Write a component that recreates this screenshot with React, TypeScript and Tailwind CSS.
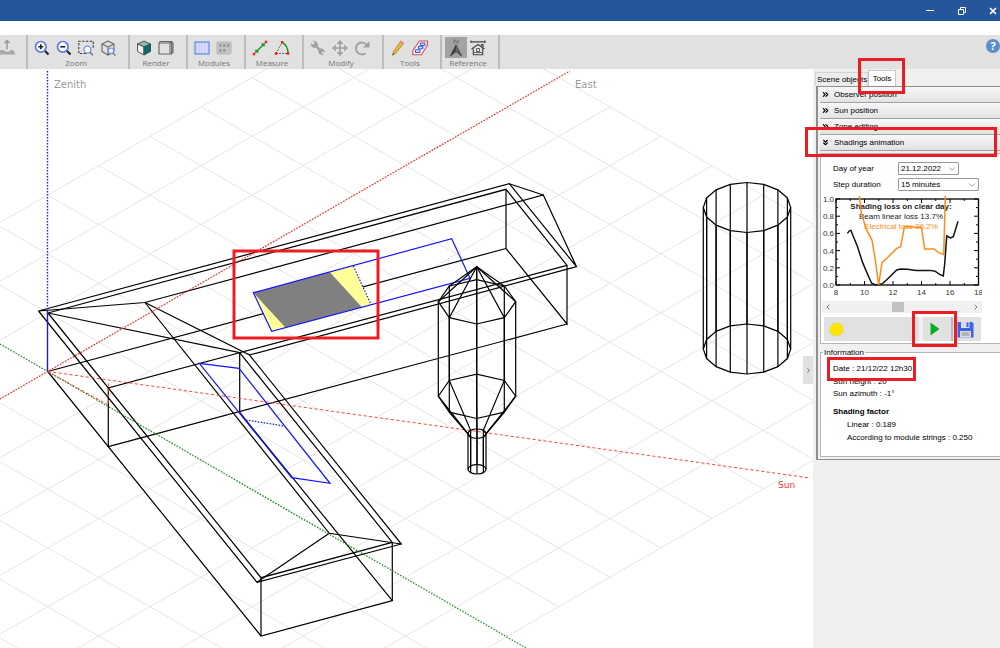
import { useState } from 'react';
import type { ReactNode } from 'react';
import { ChevronDown, ChevronLeft, ChevronRight, ChevronsDown, ChevronsRight, Move, X } from 'lucide-react';

type Point = [number, number];

const toPoints = (pts: Point[]) => pts.map((p) => p.join(',')).join(' ');

/* ---------- toolbar ---------- */

function Icon({ children, size = 16 }: { children: ReactNode; size?: number }) {
  return (
    <svg width={size} height={size} viewBox="0 0 16 16" fill="none" aria-hidden="true">
      {children}
    </svg>
  );
}

function Magnifier({ minus }: { minus?: boolean }) {
  return (
    <Icon>
      <path d="M10.5 10.5 14.5 14.5" stroke="#222" strokeWidth="2.2" />
      <circle cx="6.8" cy="6.8" r="5.3" fill="#fff" stroke="#5b78f0" strokeWidth="1.7" />
      <path d={minus ? 'M4.3 6.8h5' : 'M4.3 6.8h5M6.8 4.3v5'} stroke="#222" strokeWidth="1.6" />
    </Icon>
  );
}

function ZoomWindowIcon() {
  return (
    <Icon>
      <path d="M8 13.5H.8V1.2h14.4V8" stroke="#333" strokeWidth="1.1" strokeDasharray="2.4 1.4" />
      <circle cx="9.4" cy="9.6" r="3.5" fill="#fff" stroke="#6f8bf2" strokeWidth="1.3" />
      <path d="M12 12.2 15 15.3" stroke="#777" strokeWidth="1.6" />
    </Icon>
  );
}

function ZoomAllIcon() {
  return (
    <Icon>
      <path d="M8 1 14 4v7.5L8 15 2 11.5V4zM2 4l6 3 6-3M8 7v8" stroke="#666" strokeWidth="1.1" />
      <circle cx="11" cy="10.8" r="2.8" fill="#eef" stroke="#6f8bf2" strokeWidth="1.1" />
      <path d="m13 13 2.4 2.4" stroke="#777" strokeWidth="1.4" />
    </Icon>
  );
}

function ShadedCubeIcon() {
  return (
    <Icon>
      <path d="M8 1 14.5 4 8 7 1.5 4z" fill="#8fb9b9" stroke="#555" />
      <path d="M1.5 4 8 7v8l-6.5-3.5z" fill="#efefef" stroke="#555" />
      <path d="M14.5 4 8 7v8l6.5-3.5z" fill="#0d6b6b" stroke="#2b5555" />
    </Icon>
  );
}

function WireBoxIcon() {
  return (
    <Icon>
      <path d="M1 3h11v11H1zM1 3l1.2-1.5h11.5L15 3v9l-1.3 2H12M12 3l1.7-1.5M13.7 1.5V14" stroke="#666" strokeWidth="1.1" />
    </Icon>
  );
}

function ModulesIcon() {
  return (
    <Icon>
      <rect x="1" y="2" width="14" height="12" fill="#c9ccff" />
      <path d="M3.8 2v12M6.6 2v12M9.4 2v12M12.2 2v12M1 5h14M1 8h14M1 11h14" stroke="#e9eaff" strokeWidth=".5" />
      <rect x="1" y="2" width="14" height="12" stroke="#5c8be8" strokeWidth="1.2" />
    </Icon>
  );
}

function ModulesOffIcon() {
  return (
    <Icon>
      <rect x="1" y="2" width="14" height="12" rx="1" fill="#c4c4c4" stroke="#b4b4b4" />
      <path d="M3 4h2.5v3H3zM7 4h2.5v3H7zM11 4h2.5v3H11zM3 9h2.5v3H3zM7 9h2.5v3H7z" fill="#9c9c9c" />
    </Icon>
  );
}

function DistanceIcon() {
  return (
    <Icon>
      <path d="M2 14 14 2" stroke="#777" />
      <path d="M4 12 12 4M4 12V9.5M4 12h2.5M12 4v2.5M12 4H9.5" stroke="#159a25" strokeWidth="1.5" />
      <path d="M.8 12.8h2.4v2.4H.8zM12.8.8h2.4v2.4h-2.4z" fill="#f01818" />
    </Icon>
  );
}

function AngleIcon() {
  return (
    <Icon>
      <path d="M2 13.5 8 2.5M2 13.5h12" stroke="#666" strokeDasharray="2 1" />
      <path d="M9 3c3 1.5 5 6 5 9.5" stroke="#159a25" strokeWidth="1.5" />
      <path d="M.8 12.3h2.4v2.4H.8zM7 1h2.4v2.4H7zM12.8 12.3h2.4v2.4h-2.4z" fill="#f01818" />
    </Icon>
  );
}

function WrenchIcon() {
  return (
    <Icon>
      <path
        d="M3.5.8 6 1.8c1.5 1 2 2.6 1.5 4.2l2.3 3c1.7-.5 3.5 0 4.3 1.5l.4 1.5-2-.8-1.2 1 .3 1.5 1.8.8c-2 .6-4-.3-4.7-2-.3-1 0-1.7.1-2L6 7.5C4 8 2.2 7 1.5 5.5L1.2 3.5 3 4.8l1.7-.8.1-1.5z"
        fill="#a0a0a0"
        stroke="#a0a0a0"
        strokeWidth=".6"
      />
    </Icon>
  );
}

function RotateIcon() {
  return (
    <Icon>
      <path d="M11.5 13.3A6 6 0 1 1 12.8 5" stroke="#a0a0a0" strokeWidth="1.9" />
      <path d="M15.5 1v6.5H9z" fill="#a0a0a0" />
    </Icon>
  );
}

function PencilIcon() {
  return (
    <Icon>
      <path d="m2.5 15.3 1-4L10.8 1l3 2L6 13.3z" fill="#e8b23c" stroke="#a9792a" strokeWidth=".6" />
      <path d="m10 2 1-1.3 3 2-1 1.5z" fill="#e58a7d" />
      <path d="m2.5 15.3.5-2 1.3 1z" fill="#333" />
    </Icon>
  );
}

function PartitionIcon() {
  return (
    <Icon>
      <path d="M.8 10.5 7.5 1h8v4l-6 9.8H.8z" fill="#f4f6ff" stroke="#e04848" strokeWidth="1.1" />
      <path d="M8.5 3H13v2.5H8.5zM6.5 6.3H11v2.5H6.5zM3.5 9.8H8v2.7H3.5z" stroke="#3557d6" fill="#d8e0ff" />
    </Icon>
  );
}

function NorthIcon() {
  return (
    <Icon size={18}>
      <path d="M6.3 4V.5L9.7 4V.5" stroke="#666" strokeWidth=".8" />
      <path d="m8 5.5 5 9.5-5-4-5 4z" fill="#6a6a6a" stroke="#4a4a4a" strokeWidth=".9" />
      <path d="M8 5.5V11l-5 4z" fill="#444" />
    </Icon>
  );
}

function HouseIcon() {
  return (
    <Icon>
      <path d="M1 1.8h14M1 .5v2.6M15 .5v2.6" stroke="#444" strokeWidth="1.2" />
      <path d="M1.5 9 8 4.5 14.5 9M3.3 8.5v6.3h9.4V8.5M11.5 6V4.5H13v3" stroke="#444" strokeWidth="1.1" />
      <path d="M6.5 8.5h3v3h-3zM3.5 12.5h9" stroke="#555" strokeWidth=".9" />
    </Icon>
  );
}

interface Tool {
  name: string;
  icon: ReactNode;
  active?: boolean;
}

interface ToolGroup {
  label: string;
  width: string;
  tools: Tool[];
}

const GROUPS: ToolGroup[] = [
  {
    label: 'Zoom',
    width: 'w-[102px]',
    tools: [
      { name: 'Zoom in', icon: <Magnifier /> },
      { name: 'Zoom out', icon: <Magnifier minus /> },
      { name: 'Zoom window', icon: <ZoomWindowIcon /> },
      { name: 'Zoom all', icon: <ZoomAllIcon /> },
    ],
  },
  {
    label: 'Render',
    width: 'w-[58px]',
    tools: [
      { name: 'Realistic', icon: <ShadedCubeIcon /> },
      { name: 'Wireframe', icon: <WireBoxIcon /> },
    ],
  },
  {
    label: 'Modules',
    width: 'w-[58px]',
    tools: [
      { name: 'Show modules', icon: <ModulesIcon /> },
      { name: 'Show strings', icon: <ModulesOffIcon /> },
    ],
  },
  {
    label: 'Measure',
    width: 'w-[58px]',
    tools: [
      { name: 'Distance', icon: <DistanceIcon /> },
      { name: 'Angle', icon: <AngleIcon /> },
    ],
  },
  {
    label: 'Modify',
    width: 'w-[80px]',
    tools: [
      { name: 'Edit', icon: <WrenchIcon /> },
      { name: 'Move', icon: <Move size={16} color="#a0a0a0" strokeWidth={2.5} /> },
      { name: 'Rotate', icon: <RotateIcon /> },
    ],
  },
  {
    label: 'Tools',
    width: 'w-[58px]',
    tools: [
      { name: 'Zone editing', icon: <PencilIcon /> },
      { name: 'Partition', icon: <PartitionIcon /> },
    ],
  },
  {
    label: 'Reference',
    width: 'w-[58px]',
    tools: [
      { name: 'North', icon: <NorthIcon />, active: true },
      { name: 'Building', icon: <HouseIcon /> },
    ],
  },
];

function TitleBar() {
  return (
    <header className="flex h-[21px] shrink-0 items-center justify-end gap-5 bg-[#25559b] pr-0.5 text-white">
      <button aria-label="Minimize" className="flex w-3 justify-center">
        <span className="h-px w-2 bg-white" />
      </button>
      <button aria-label="Restore" className="flex w-3 justify-center">
        <svg width="8" height="8" viewBox="0 0 8 8" fill="none" stroke="#fff">
          <path d="M.5 2.5h5v5h-5zM2.5 2.5v-2h5v5h-2" />
        </svg>
      </button>
      <button aria-label="Close" className="flex w-2.5 justify-center">
        <X size={10} strokeWidth={4} />
      </button>
    </header>
  );
}

function Toolbar() {
  return (
    <nav className="mt-3.5 flex h-[34px] shrink-0 bg-[#e1e1e1] font-['Open_Sans',sans-serif]">
      <div className="flex w-7 items-start border-r-2 border-[#bdbdbd] pt-1">
        <button aria-label="Export">
          <Icon>
            <path d="M7 10.5v-9M4.5 4 7 1.5 9.5 4" stroke="#999" strokeWidth="1.5" />
            <path d="M0 11h4l1 1.5h4.5l1-1.5h3l2 4.5H0z" fill="#a8a8a8" />
          </Icon>
        </button>
      </div>
      {GROUPS.map((g) => (
        <div key={g.label} className={`flex shrink-0 flex-col items-center border-r-2 border-[#bdbdbd] pr-1 ${g.width}`}>
          <div className="flex pt-0.5 pr-0.5">
            {g.tools.map((t) => (
              <button
                key={t.name}
                aria-label={t.name}
                className={`flex h-[21px] w-[22px] items-center justify-center ${t.active ? 'bg-[#a3a3a3]' : ''}`}
              >
                {t.icon}
              </button>
            ))}
          </div>
          <span className="text-[8px] leading-[10px] text-[#777]">{g.label}</span>
        </div>
      ))}
      <button aria-label="Help" className="ml-auto flex w-[14px] items-start pt-1">
        <span className="flex h-[14px] w-[14px] shrink-0 items-center justify-center rounded-full bg-[#5b8fc9] text-[11px] font-bold text-white">
          ?
        </span>
      </button>
    </nav>
  );
}

/* ---------- 3D scene ---------- */

const ORIGIN: Point = [47.7, 371.5];
const STEP_X = 51.1;
const STEP_Y = 29.4;

const gridPoint = (i: number, j: number): Point => [
  ORIGIN[0] + (i + j) * STEP_X,
  ORIGIN[1] + (j - i) * STEP_Y,
];

function Grid() {
  const lines: [Point, Point][] = [];
  for (let j = -3; j <= 9; j++) lines.push([gridPoint(-9, j), gridPoint(10, j)]);
  for (let i = -9; i <= 10; i++) lines.push([gridPoint(i, -3), gridPoint(i, 9)]);
  return (
    <g stroke="#e6e6e6">
      {lines.map(([a, b], k) => (
        <line key={k} x1={a[0]} y1={a[1]} x2={b[0]} y2={b[1]} />
      ))}
    </g>
  );
}

const BUILDING: Point[][] = [
  // long wing, roof
  [[249.5, 355], [576.5, 266.7], [509.3, 183.7], [38.5, 311], [145, 302.5], [543.3, 195], [576.5, 266.7]],
  [[543.3, 195], [509.3, 183.7]],
  [[48, 313], [506, 189.3], [567, 265.3], [239.7, 352.7], [48, 313]],
  // long wing, walls
  [[506, 189.3], [506, 248.5], [567, 324], [567, 265.3]],
  [[47.7, 371.5], [506, 248.5]],
  [[108.3, 446.7], [567, 324]],
  [[108.3, 446.7], [108.3, 388], [239.7, 352.7], [239.7, 412.5]],
  // short wing, roof
  [[145, 302.5], [249.5, 355], [401.3, 544], [257, 582.3], [38.5, 311]],
  [[145, 302.5], [329.3, 533.3], [401.3, 544]],
  [[329.3, 533.3], [257, 582.3]],
  [[48, 313], [261, 577.7], [392.3, 542.3], [239.7, 352.7]],
  // short wing, walls
  [[47.7, 371.5], [261, 636], [392.3, 600.7], [239.7, 412.5]],
  [[261, 577.7], [261, 636]],
  [[392.3, 542.3], [392.3, 600.7]],
];

const TANK_TOP: Point[] = [
  [438.3, 301.7], [449.3, 317.7], [476.7, 324], [504.3, 317.7],
  [515.7, 301.7], [504.3, 286], [476.7, 279.7], [449.3, 286],
];
const TANK_APEX: Point = [476.7, 266.7];
const TANK_HEIGHT = 94.5;

const ring = (cx: number, cy: number, rx: number, ry: number, n: number): Point[] =>
  Array.from({ length: n }, (_, k) => {
    const a = Math.PI - (k * 2 * Math.PI) / n;
    return [cx + rx * Math.cos(a), cy + ry * Math.sin(a)];
  });

function Tank() {
  const bottom = TANK_TOP.map(([x, y]): Point => [x, y + TANK_HEIGHT]);
  const neck = ring(477, 433.7, 9, 4.7, 8);
  const foot = ring(477, 469.3, 9, 4.7, 8);
  return (
    <g>
      <polygon points={toPoints(TANK_TOP)} />
      <polygon points={toPoints(bottom)} />
      <ellipse cx="477" cy="433.7" rx="9" ry="4.7" />
      <ellipse cx="477" cy="469.3" rx="9" ry="4.7" />
      {TANK_TOP.map((p, k) => (
        <polyline key={k} points={toPoints([TANK_APEX, p, bottom[k], neck[k], foot[k]])} />
      ))}
    </g>
  );
}

function Cylinder() {
  const top = ring(747, 207.5, 43.7, 25, 16);
  const bottom = ring(747, 349, 43.7, 25, 16);
  return (
    <g>
      <polygon points={toPoints(top)} />
      <polygon points={toPoints(bottom)} />
      {top.map((p, k) => (
        <polyline key={k} points={toPoints([p, bottom[k]])} />
      ))}
    </g>
  );
}

function Scene() {
  return (
    <main className="relative flex min-w-0 flex-1 overflow-hidden bg-white">
      <svg className="h-full w-full" role="img" aria-label="Shading scene">
        <g transform="translate(0 -69)" fill="none">
          <Grid />
          <g stroke="#000" strokeWidth="1.2">
            {BUILDING.map((pts, k) => (
              <polyline key={k} points={toPoints(pts)} />
            ))}
          </g>

          <line x1="0" y1="399" x2="570" y2="71" stroke="#ff2020" strokeWidth="1.2" strokeDasharray="1.5 1.5" />
          <line x1="0" y1="344" x2="526" y2="648" stroke="#1e8c1e" strokeWidth="1.2" strokeDasharray="1.5 1.5" />
          <line x1="47.7" y1="371.5" x2="810" y2="478" stroke="#ff4040" strokeDasharray="3 2.5" />
          <path d="M47.7 371.5 108.3 405V381" stroke="#ff4040" strokeDasharray="3 2.5" />
          <line x1="47.5" y1="71" x2="47.5" y2="312" stroke="#1a1aff" strokeWidth="1.4" strokeDasharray="1.5 1.5" />
          <line x1="47.5" y1="312" x2="47.5" y2="371" stroke="#1a1ae0" strokeWidth="1.4" />

          <polygon points="253.3,292.7 353.3,266 371,304.3 271.7,331.3" fill="#ffff99" />
          <polygon points="253.3,292.7 329.7,272 361.7,307 285.7,327.7" fill="#808080" />
          <g stroke="#1414ff" strokeWidth="1.2">
            <polygon points="253.3,292.7 451.7,238.7 470,278.3 271.7,331.3" />
            <path d="M353.3 266 371 304.3" strokeDasharray="1.5 1.5" />
            <polygon points="199.3,363.3 239,368.3 330,483.3 291.7,477.7" />
            <path d="M246 420 284.3 426" strokeDasharray="1.5 1.5" />
          </g>

          <g stroke="#000" strokeWidth="1.2">
            <Tank />
            <Cylinder />
          </g>

          <rect x="234" y="251" width="144" height="87" stroke="#ed1c24" strokeWidth="3" />
          <g className="font-['DejaVu_Sans',sans-serif] text-[10px]" stroke="none">
            <text x="54" y="88" fill="#999">Zenith</text>
            <text x="575" y="88" fill="#999">East</text>
            <text x="778" y="488" fill="#f03030" className="text-[9px]">Sun</text>
          </g>
        </g>
      </svg>
      <button
        aria-label="Collapse panel"
        className="absolute top-[287px] right-0 flex h-7 w-2.5 items-center justify-center bg-[#e1e1e1] text-[#555]"
      >
        <ChevronRight size={7} strokeWidth={3} />
      </button>
    </main>
  );
}

/* ---------- side panel ---------- */

function Highlight({ className }: { className: string }) {
  return <span className={`pointer-events-none absolute z-10 border-[3px] border-[#ed1c24] ${className}`} />;
}

function SectionHeader({ title, open, children }: { title: string; open?: boolean; children?: ReactNode }) {
  const Chevrons = open ? ChevronsDown : ChevronsRight;
  return (
    <div className="relative">
      <button
        aria-expanded={!!open}
        className="flex h-4 w-full items-center gap-1 border-b border-[#a0a0a0] bg-linear-to-b from-[#f8f8f8] to-[#e2e2e2] pl-px"
      >
        <Chevrons size={9} strokeWidth={3} />
        {title}
      </button>
      {children}
    </div>
  );
}

type Sample = [hour: number, loss: number];

const LINEAR: Sample[] = [
  [8.8, 0.6], [8.94, 0.63], [9.05, 0.635], [9.2, 0.57], [9.5, 0.45], [9.87, 0.26], [10.27, 0.105], [10.5, 0.02],
  [10.8, 0], [11.27, 0.016], [11.6, 0.066], [12.26, 0.174], [12.54, 0.186], [13, 0.182], [13.66, 0.17],
  [14.6, 0.17], [14.95, 0.16], [15.3, 0.12], [15.53, 0.105], [15.63, 0.25], [15.77, 0.57], [16.05, 0.547],
  [16.23, 0.562], [16.56, 0.74],
];

const ELECTRICAL: Sample[] = [
  [9.64, 1.035], [9.78, 0.83], [10.15, 0.64], [10.53, 0.52], [10.76, 0.29], [10.99, 0], [11.23, 0.264],
  [11.5, 0.3], [12.26, 0.426], [12.54, 0.446], [12.8, 0.68], [14, 0.67], [14.22, 0.42], [14.88, 0.42],
  [15.18, 0.38], [15.56, 0.353], [15.67, 1.035],
];

const chartX = (hour: number) => 14 + (hour - 8) * 14.25;
const chartY = (loss: number) => 91 - loss * 86;
const toCurve = (data: Sample[]) => toPoints(data.map(([h, l]): Point => [chartX(h), chartY(l)]));

function LossChart() {
  return (
    <svg width="160" height="103" className="block overflow-hidden text-[8px]" role="img" aria-label="Shading loss">
      <g textAnchor="middle">
        <text x="79" y="15" className="font-bold" fill="#222">Shading loss on clear day:</text>
        <text x="79" y="25" fill="#222">Beam linear loss 13.7%</text>
        <text x="79" y="35" fill="#ff8c1a">Electrical loss 26.2%</text>
      </g>
      <rect x="14" y="5" width="142.5" height="86" fill="none" stroke="#000" strokeWidth="1.3" />
      {[0, 0.2, 0.4, 0.6, 0.8, 1].map((v) => (
        <g key={v}>
          <path d={`M14 ${chartY(v)}h4M156 ${chartY(v)}h-4`} stroke="#000" />
          {v < 1 && <path d={`M14 ${chartY(v + 0.1)}h2M156 ${chartY(v + 0.1)}h-2`} stroke="#000" />}
          <text x="12" y={chartY(v) + 3} textAnchor="end" fill="#333">{v.toFixed(1)}</text>
        </g>
      ))}
      {[8, 10, 12, 14, 16, 18].map((h) => (
        <g key={h}>
          <path d={`M${chartX(h)} 91v-4M${chartX(h)} 5v4`} stroke="#000" />
          {h < 18 && <path d={`M${chartX(h + 1)} 91v-2M${chartX(h + 1)} 5v2`} stroke="#000" />}
          <text x={chartX(h)} y="101" textAnchor="middle" fill="#333">{h}</text>
        </g>
      ))}
      <g fill="none" strokeWidth="1.5">
        <polyline points={toCurve(LINEAR)} stroke="#111" />
        <polyline points={toCurve(ELECTRICAL)} stroke="#ff8c1a" />
      </g>
    </svg>
  );
}

function Dropdown({ id, value, width }: { id: string; value: string; width: string }) {
  return (
    <div className={`relative ${width}`}>
      <select
        id={id}
        defaultValue={value}
        className="block h-[13px] w-full appearance-none rounded-[1px] border border-[#999] bg-white px-0.5 text-[8px] leading-[11px]"
      >
        <option>{value}</option>
      </select>
      <ChevronDown size={10} className="pointer-events-none absolute top-0.5 right-0.5 text-[#888]" strokeWidth={2} />
    </div>
  );
}

function Animation() {
  const [step, setStep] = useState(47);
  return (
    <section className="border-b border-[#b5b5b5] bg-white pt-2">
      <div className="grid grid-cols-[65px_auto] items-center gap-y-[3px] pl-3">
        <label htmlFor="day">Day of year</label>
        <Dropdown id="day" value="21.12.2022" width="w-[61px]" />
        <label htmlFor="step">Step duration</label>
        <Dropdown id="step" value="15 minutes" width="w-[81px]" />
      </div>
      <div className="mt-[3px] ml-px">
        <LossChart />
      </div>
      <div className="mt-1 ml-px flex h-3 w-[160px] items-center bg-[#f0f0f0] text-[#777]">
        <button aria-label="Earlier" className="flex w-3 justify-center">
          <ChevronLeft size={8} strokeWidth={3} />
        </button>
        <input
          type="range"
          aria-label="Time of day"
          value={step}
          onChange={(e) => setStep(Number(e.target.value))}
          className="h-2.5 min-w-0 flex-1 appearance-none bg-transparent [&::-webkit-slider-thumb]:h-2.5 [&::-webkit-slider-thumb]:w-3 [&::-webkit-slider-thumb]:appearance-none [&::-webkit-slider-thumb]:bg-[#c1c1c1]"
        />
        <button aria-label="Later" className="flex w-3 justify-center">
          <ChevronRight size={8} strokeWidth={3} />
        </button>
      </div>
      <div className="mt-1 mb-0.5 ml-[3px] flex h-6 w-[157px] bg-[#e1e1e1]">
        <button aria-label="Sun view" className="flex flex-1 items-center border-r-4 border-[#f0f0f0] pl-[5px]">
          <svg width="15" height="15" viewBox="0 0 16 16">
            <path
              d="m8 .3 1.4 1.9 2.2-.9.7 2.2 2.3.3-.4 2.3 1.6 1.7-1.6 1.7.4 2.3-2.3.3-.7 2.2-2.2-.9L8 15.7l-1.4-1.9-2.2.9-.7-2.2-2.3-.3.4-2.3L.2 8.2l1.6-1.7-.4-2.3 2.3-.3.7-2.2 2.2.9z"
              fill="#ffe600"
              stroke="#f0cc10"
              strokeWidth=".6"
            />
          </svg>
        </button>
        <div className="relative flex w-[30px] border-r-2 border-[#bbb]">
          <button aria-label="Play animation" className="flex flex-1 items-center justify-center pr-1">
            <svg width="10" height="14" viewBox="0 0 10 14">
              <path d="M.5.5 9.5 7l-9 6.5z" fill="#08ac20" />
            </svg>
          </button>
          <Highlight className="-top-1.5 -right-1.5 h-9 w-[45px]" />
        </div>
        <button aria-label="Save" className="flex w-7 items-center justify-center pr-1">
          <svg width="17" height="17" viewBox="0 0 17 17">
            <path d="M.5 1H15l1.5 1.5v14H.5z" fill="#3c63e6" />
            <path d="M4 1h8.5v6H4z" fill="#d9dce6" />
            <path d="M9.5 1.5h2V6h-2z" fill="#3c63e6" />
            <path d="M3 10h11v6.5H3z" fill="#ddd" />
            <path d="M4.5 12h8M4.5 14h8" stroke="#888" />
          </svg>
        </button>
      </div>
    </section>
  );
}

function Information() {
  return (
    <fieldset className="mt-0.5 h-[109px] border border-r-0 border-[#b5b5b5] bg-white pl-3">
      <legend className="-ml-2.5 px-px leading-[9px]">Information</legend>
      <div className="relative mt-1.5 leading-3">
        <Highlight className="-top-1.5 -left-1.5 h-6 w-[89px]" />
        <p>Date : 21/12/22 12h30</p>
      </div>
      <p className="mt-px leading-3">Sun height : 20°</p>
      <p className="leading-3">Sun azimuth : -1°</p>
      <p className="mt-1.5 leading-3 font-bold">Shading factor</p>
      <div className="pl-3.5 leading-[13px]">
        <p>Linear : 0.189</p>
        <p>According to module strings : 0.250</p>
      </div>
    </fieldset>
  );
}

function SidePanel() {
  return (
    <aside className="w-[187px] shrink-0 bg-[#f0f0f0] pt-px pl-0.5 font-['Liberation_Sans',Arial,sans-serif] text-[8px] text-black">
      <div role="tablist" className="flex items-end">
        <button role="tab" aria-selected="false" className="h-[14px] w-[53px] border border-b-0 border-[#d4d4d4] bg-[#ececec] pl-px text-left whitespace-nowrap">
          Scene objects
        </button>
        <button role="tab" aria-selected="true" className="relative h-4 w-7 border border-b-0 border-[#c8c8c8] bg-white">
          Tools
          <Highlight className="-top-[13px] -right-2.5 h-9 w-[47px]" />
        </button>
      </div>
      <div className="ml-px border-y border-l-2 border-[#8f8f8f] bg-[#f0f0f0] pb-0.5 pl-0.5">
        <SectionHeader title="Observer position" />
        <SectionHeader title="Sun position" />
        <SectionHeader title="Zone editing" />
        <SectionHeader title="Shadings animation" open>
          <Highlight className="-top-2 right-[3px] h-[30px] w-[192px]" />
        </SectionHeader>
        <div className="mt-0.5 border-t border-l border-[#b5b5b5]">
          <Animation />
        </div>
        <div className="pt-0.5">
          <Information />
        </div>
      </div>
    </aside>
  );
}

export default function App() {
  return (
    <div className="flex h-screen flex-col overflow-hidden bg-white">
      <TitleBar />
      <Toolbar />
      <div className="flex min-h-0 flex-1">
        <Scene />
        <SidePanel />
      </div>
    </div>
  );
}
